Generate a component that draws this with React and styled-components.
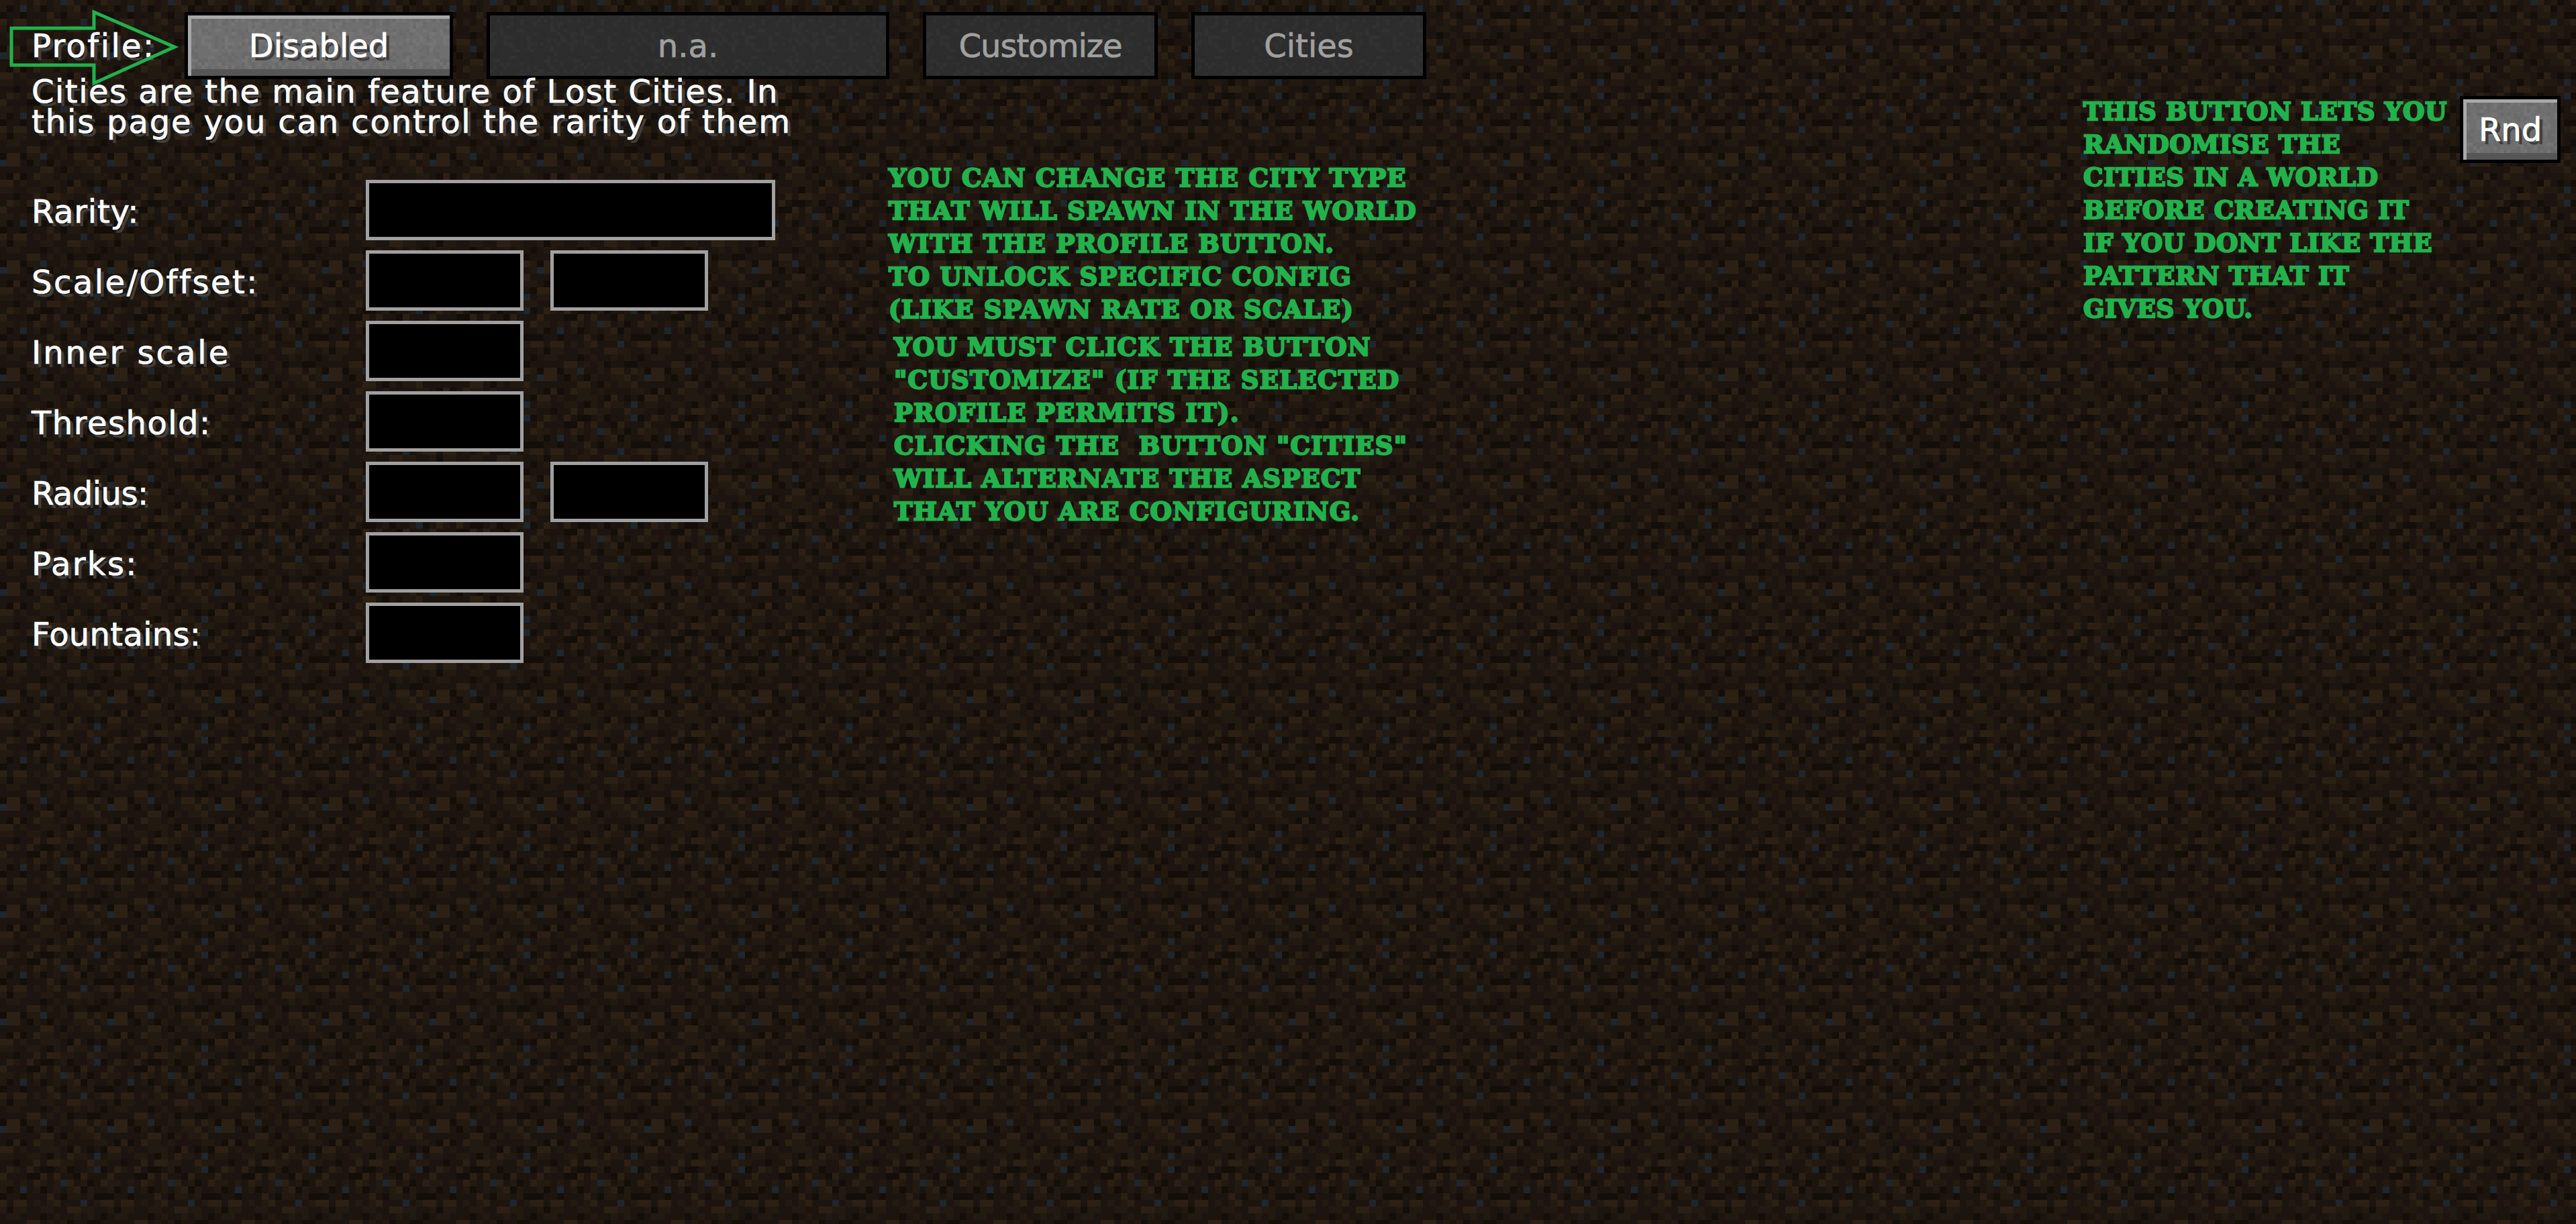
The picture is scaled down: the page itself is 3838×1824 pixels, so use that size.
import styled, { createGlobalStyle } from "styled-components";

// dirt tile, one letter per texture pixel
const DIRT = [
	"eccadbadbaabbcab",
	"aaaaaaccadbabbca",
	"adcdacbbabaaaabb",
	"ccabaabbbadcadad",
	"bbaabbadbacbbaea",
	"aadaacaccbbaacbb",
	"acbacaddabdaabed",
	"caaaddcacaadcaaa",
	"bbabacbabecabdac",
	"bdaeabdababcdbaa",
	"daadaaacadbbabdd",
	"caccababcaaaeabc",
	"bdbbaabbaaccbbaa",
	"abbaaadabaababad",
	"aaaaccababdaadda",
	"dccdbbeaabaccacb",
];
const DIRT_COLORS = {
	a: "#1c150f",
	b: "#221910",
	c: "#2c2015",
	d: "#140e09",
	e: "#1f262c",
};

const svgUri = (size, body) =>
	`url("data:image/svg+xml,${encodeURIComponent(
		`<svg xmlns='http://www.w3.org/2000/svg' width='${size}' height='${size}' shape-rendering='crispEdges'>${body}</svg>`
	)}")`;

const dirtTile = svgUri(
	160,
	DIRT.map((row, y) =>
		row
			.split("")
			.map(
				(c, x) =>
					`<rect x='${x * 10}' y='${y * 10}' width='10' height='10' fill='${DIRT_COLORS[c]}'/>`
			)
			.join("")
	).join("")
);

// speckle for the stone buttons
const speckle = (alpha) => {
	let seed = 7;
	let out = "";
	for (let y = 0; y < 24; y++) {
		for (let x = 0; x < 24; x++) {
			seed = (seed * 1103515245 + 12345) % 2147483648;
			const r = (seed >> 8) % 100;
			if (r < 22) {
				out += `<rect x='${x * 5}' y='${y * 5}' width='5' height='5' fill='#000' fill-opacity='${alpha}'/>`;
			} else if (r > 78) {
				out += `<rect x='${x * 5}' y='${y * 5}' width='5' height='5' fill='#fff' fill-opacity='${alpha}'/>`;
			}
		}
	}
	return svgUri(120, out);
};
const activeSpeckle = speckle(0.045);
const disabledSpeckle = speckle(0.02);

const GlobalStyle = createGlobalStyle`
	html, body {
		margin: 0;
		padding: 0;
		background-color: #1c150f;
	}
	* {
		box-sizing: border-box;
	}
`;

const Page = styled.div`
	position: relative;
	width: 3838px;
	height: 1824px;
	overflow: hidden;
	padding-top: 18px;
	background-image: ${dirtTile};
	background-position: 0 78px;
	font-family: "DejaVu Sans", "Liberation Sans", sans-serif;
	font-size: 48px;
	-webkit-text-stroke: 0.7px;
	color: #fff;
`;

const Arrow = styled.svg`
	position: absolute;
	top: 0;
	left: 0;
	pointer-events: none;
`;

const TopBar = styled.div`
	display: flex;
	height: 100px;
	padding-left: 47px;
`;

const MCText = styled.span`
	text-shadow: 5px 5px 0 #3f3f3f;
	white-space: pre;
`;

const ProfileLabel = styled(MCText)`
	flex: 0 0 228px;
	line-height: 100px;
	letter-spacing: 2.4px;
`;

const ButtonRow = styled.div`
	display: flex;
	gap: 50px;
`;

const McButton = styled.button`
	width: ${(p) => p.$width}px;
	height: 100px;
	padding: 0;
	border: 5px solid #000;
	font: inherit;
	line-height: 88px;
	letter-spacing: ${(p) => p.$spacing || 0}px;
	color: ${(p) => (p.$disabled ? "#a0a0a0" : "#fff")};
	text-shadow: ${(p) => (p.$disabled ? "none" : "5px 5px 0 #3f3f3f")};
	background-color: ${(p) => (p.$disabled ? "#2d2d2d" : "#6f6f6f")};
	background-image: ${(p) => (p.$disabled ? disabledSpeckle : activeSpeckle)};
	box-shadow: ${(p) =>
		p.$disabled
			? "none"
			: "inset 5px 5px 0 #a8a8a8, inset 0 -10px 0 #565656"};
`;

const Body = styled.div`
	display: flex;
	align-items: flex-start;
	margin-top: -4px;
`;

const LeftColumn = styled.div`
	flex: 0 0 1324px;
	padding-left: 47px;
`;

const IntroLine = styled(MCText)`
	display: block;
	line-height: 45px;
	letter-spacing: ${(p) => p.$spacing}px;
`;

const Form = styled.div`
	display: flex;
	flex-direction: column;
	gap: 15px;
	margin-top: 64px;
`;

const FormRow = styled.div`
	display: flex;
	height: 90px;
`;

const FieldLabel = styled(MCText)`
	flex: 0 0 498px;
	line-height: 94px;
	letter-spacing: ${(p) => p.$spacing}px;
`;

const Fields = styled.div`
	display: flex;
	gap: 40px;
`;

const TextField = styled.input`
	width: ${(p) => p.$width || 235}px;
	height: 90px;
	padding: 0;
	border: 5px solid #a0a0a0;
	border-radius: 0;
	background: #000;
	outline: none;
`;

const Note = styled.div`
	font-family: "DejaVu Serif", "Liberation Serif", serif;
	font-weight: 700;
	font-size: 37px;
	line-height: 49px;
	letter-spacing: 1.3px;
	color: #22b14c;
	-webkit-text-stroke: 2.4px #22b14c;
	white-space: pre;
`;

const CenterNotes = styled.div`
	margin-top: 127px;
`;

const SecondNote = styled(Note)`
	margin-top: 7px;
	padding-left: 8px;
`;

const RightGroup = styled.div`
	display: flex;
	align-items: flex-start;
	margin-left: auto;
	padding-right: 23px;
`;

const RightNote = styled(Note)`
	width: 561px;
	margin-top: 28px;
	letter-spacing: 0.7px;
`;

const RandomButton = styled(McButton)`
	margin-top: 29px;
`;

const rows = [
	{ label: "Rarity:", spacing: 0.8, fields: [610] },
	{ label: "Scale/Offset:", spacing: 2.5, fields: [235, 235] },
	{ label: "Inner scale", spacing: 3, fields: [235] },
	{ label: "Threshold:", spacing: 1.5, fields: [235] },
	{ label: "Radius:", spacing: -0.5, fields: [235, 235] },
	{ label: "Parks:", spacing: 2.3, fields: [235] },
	{ label: "Fountains:", spacing: 0.3, fields: [235] },
];

const firstNote = [
	"YOU CAN CHANGE THE CITY TYPE",
	"THAT WILL SPAWN IN THE WORLD",
	"WITH THE PROFILE BUTTON.",
	"TO UNLOCK SPECIFIC CONFIG",
	"(LIKE SPAWN RATE OR SCALE)",
];
const secondNote = [
	"YOU MUST CLICK THE BUTTON",
	'"CUSTOMIZE" (IF THE SELECTED',
	"PROFILE PERMITS IT).",
	'CLICKING THE  BUTTON "CITIES"',
	"WILL ALTERNATE THE ASPECT",
	"THAT YOU ARE CONFIGURING.",
];
const rightNote = [
	"THIS BUTTON LETS YOU",
	"RANDOMISE THE",
	"CITIES IN A WORLD",
	"BEFORE CREATING IT",
	"IF YOU DONT LIKE THE",
	"PATTERN THAT IT",
	"GIVES YOU.",
];

const App = () => {
	return (
		<Page>
			<GlobalStyle />
			<TopBar>
				<ProfileLabel>Profile:</ProfileLabel>
				<ButtonRow>
					<McButton $width={400}>Disabled</McButton>
					<McButton $width={600} $disabled>n.a.</McButton>
					<McButton $width={350} $spacing={-1} $disabled>Customize</McButton>
					<McButton $width={350} $disabled>Cities</McButton>
				</ButtonRow>
			</TopBar>
			<Body>
				<LeftColumn>
					<IntroLine $spacing={1.5}>Cities are the main feature of Lost Cities. In</IntroLine>
					<IntroLine $spacing={1.85}>this page you can control the rarity of them</IntroLine>
					<Form>
						{rows.map((row) => (
							<FormRow key={row.label}>
								<FieldLabel $spacing={row.spacing}>{row.label}</FieldLabel>
								<Fields>
									{row.fields.map((w, i) => (
										<TextField key={i} $width={w} />
									))}
								</Fields>
							</FormRow>
						))}
					</Form>
				</LeftColumn>
				<CenterNotes>
					<Note>
						{firstNote.map((line) => (
							<div key={line}>{line}</div>
						))}
					</Note>
					<SecondNote>
						{secondNote.map((line) => (
							<div key={line}>{line}</div>
						))}
					</SecondNote>
				</CenterNotes>
				<RightGroup>
					<RightNote>
						{rightNote.map((line) => (
							<div key={line}>{line}</div>
						))}
					</RightNote>
					<RandomButton $width={150}>Rnd</RandomButton>
				</RightGroup>
			</Body>
			<Arrow width="280" height="140" viewBox="0 0 280 140">
				<polygon
					points="17,42 140,42 140,18 260,70 140,124 140,97 17,97"
					fill="none"
					stroke="#22b14c"
					strokeWidth="5"
				/>
			</Arrow>
		</Page>
	);
};

export default App;
